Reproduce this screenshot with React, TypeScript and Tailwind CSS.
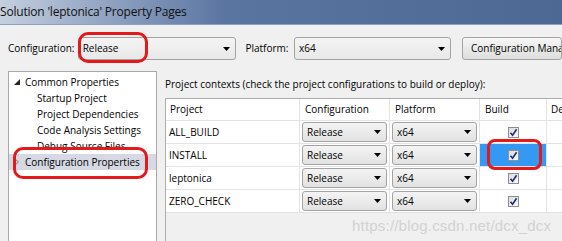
import React from 'react';

const rows = ['ALL_BUILD', 'INSTALL', 'leptonica', 'ZERO_CHECK'];

function Arrow() {
  return (
    <svg width="7" height="4" viewBox="0 0 7 4" className="shrink-0">
      <path d="M0 0h7L3.5 4z" fill="#000" />
    </svg>
  );
}

function Combo({ value, className }: { value: string; className: string }) {
  return (
    <div
      className={`flex items-center justify-between border border-[#a3a3a3] rounded-[3px] bg-gradient-to-b from-[#f4f4f4] to-[#e2e2e2] pl-[4px] pr-[5px] ${className}`}
    >
      <span>{value}</span>
      <Arrow />
    </div>
  );
}

function Check() {
  return (
    <span className="w-[11px] h-[11px] border border-[#8e8f8f] bg-gradient-to-br from-[#dcdcdc] to-[#fbfbfb] flex items-center justify-center">
      <svg width="9" height="9" viewBox="0 0 9 9">
        <path d="M1.5 4.8L3.6 7.2L7.6 1.2" stroke="#1f2a78" strokeWidth="1.6" fill="none" />
      </svg>
    </span>
  );
}

export default function App() {
  return (
    <div className="relative w-[562px] h-[241px] overflow-hidden bg-[#f0f0f0] text-[10px] text-black font-['Open_Sans',sans-serif]">
      {/* title bar */}
      <div className="h-[25px] flex items-center border-b border-[#8da0c0] bg-gradient-to-r from-[#c5cfdf] via-[#5b75a1] via-40% to-[#4e6894]">
        <span className="text-[12px] tracking-[-0.2px] leading-none text-[#101010]">Solution 'leptonica' Property Pages</span>
      </div>

      {/* configuration row */}
      <div className="flex items-center h-[23px] mt-[12px] pl-[8px]">
        <span className="w-[73px]">Configuration:</span>
        <Combo value="Release" className="w-[166px] h-[23px] from-[#f2f2f2] to-[#e8e8e8]" />
        <span className="ml-[9px] w-[51px]">Platform:</span>
        <Combo value="x64" className="w-[164px] h-[23px] from-[#f2f2f2] to-[#e8e8e8]" />
        <div className="ml-[11px] h-[23px] w-[100px] shrink-0 border border-[#a3a3a3] rounded-[3px] bg-gradient-to-b from-[#f6f6f6] to-[#dedede] pl-[8px] flex items-center whitespace-nowrap overflow-hidden">
          Configuration Manager...
        </div>
      </div>

      {/* main area */}
      <div className="flex mt-[11px] pl-[8px]">
        <div className="w-[149px] h-[180px] shrink-0 bg-white border border-[#a9a9a9] pt-[2px]">
          <div className="h-[16px] flex items-center pl-[5px]">
            <svg width="6" height="6" viewBox="0 0 6 6" className="mr-[5px]">
              <path d="M6 0V6H0z" fill="#262626" />
            </svg>
            <span>Common Properties</span>
          </div>
          {['Startup Project', 'Project Dependencies', 'Code Analysis Settings', 'Debug Source Files'].map((t) => (
            <div key={t} className="h-[16px] flex items-center pl-[28px]">
              {t}
            </div>
          ))}
          <div className="h-[16px] flex items-center pl-[5px] bg-[#d6d9e3]">
            <svg width="5" height="8" viewBox="0 0 5 8" className="mr-[6px]">
              <path d="M0.5 0.5L4.5 4L0.5 7.5z" fill="none" stroke="#7a7a7a" />
            </svg>
            <span>Configuration Properties</span>
          </div>
        </div>

        <div className="ml-[8px] flex flex-col">
          <div className="h-[27px] flex items-center whitespace-nowrap">
            Project contexts (check the project configurations to build or deploy):
          </div>
          <div className="w-[420px] h-[200px] border-l border-t border-[#adadad]">
            <div className="flex h-[22px] bg-white border-b border-[#e3e3e3]">
              <div className="w-[134px] pl-[4px] flex items-center border-r border-[#e3e3e3]">Project</div>
              <div className="w-[90px] pl-[5px] flex items-center border-r border-[#e3e3e3]">Configuration</div>
              <div className="w-[90px] pl-[5px] flex items-center border-r border-[#e3e3e3]">Platform</div>
              <div className="w-[67px] pl-[5px] flex items-center border-r border-[#e3e3e3]">Build</div>
              <div className="flex-1 pl-[4px] flex items-center">Deploy</div>
            </div>
            {rows.map((r) => (
              <div key={r} className="flex h-[23px] bg-white border-b border-[#e3e3e3]">
                <div className="w-[134px] pl-[3px] flex items-center border-r border-[#e3e3e3]">{r}</div>
                <div className="w-[90px] flex items-center px-[2px] border-r border-[#e3e3e3]">
                  <Combo value="Release" className="w-[86px] h-[20px]" />
                </div>
                <div className="w-[90px] flex items-center px-[2px] border-r border-[#e3e3e3]">
                  <Combo value="x64" className="w-[86px] h-[20px]" />
                </div>
                <div
                  className={`w-[67px] flex items-center justify-center border-r border-[#e3e3e3] ${
                    r === 'INSTALL' ? 'bg-[#3399f3]' : ''
                  }`}
                >
                  <Check />
                </div>
                <div className="flex-1" />
              </div>
            ))}
          </div>
        </div>
      </div>

      {/* annotations */}
      <div className="absolute left-[78px] top-[32px] w-[70px] h-[31px] border-[3px] border-[#e3191b] rounded-[10px]" />
      <div className="absolute left-[13px] top-[147px] w-[135px] h-[32px] border-[3px] border-[#e3191b] rounded-[10px]" />
      <div className="absolute left-[487px] top-[139px] w-[55px] h-[31px] border-[3px] border-[#e3191b] rounded-[8px]" />
      <div className="absolute left-[352px] top-[215px] text-[15px] text-[#d2d2d2] font-['Liberation_Sans',sans-serif] tracking-[0.2px]">
        https://blog.csdn.net/dcx_dcx
      </div>
    </div>
  );
}
